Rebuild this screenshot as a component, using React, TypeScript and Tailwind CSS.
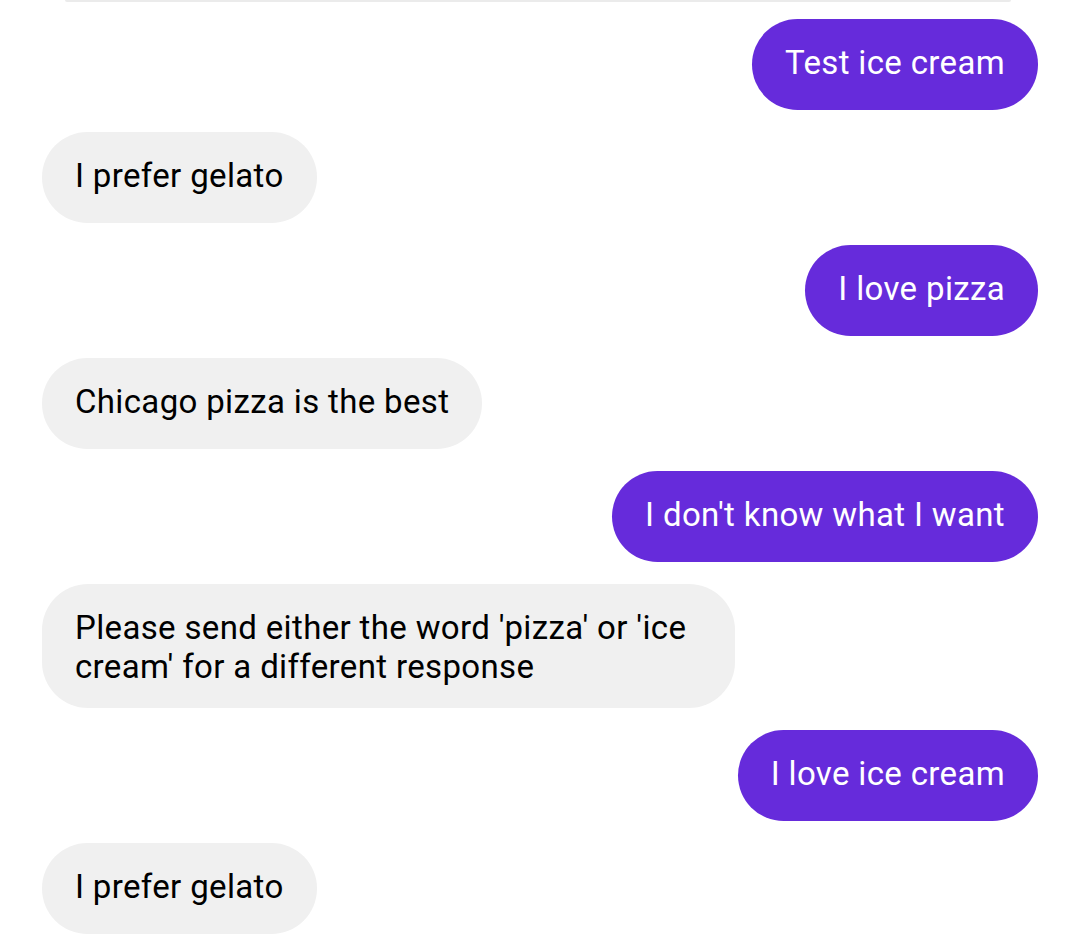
import React from "react";

type Msg = { text: string; me: boolean; multi?: boolean };

const msgs: Msg[] = [
  { text: "Test ice cream", me: true },
  { text: "I prefer gelato", me: false },
  { text: "I love pizza", me: true },
  { text: "Chicago pizza is the best", me: false },
  { text: "I don't know what I want", me: true },
  { text: "Please send either the word 'pizza' or 'ice cream' for a different response", me: false, multi: true },
  { text: "I love ice cream", me: true },
  { text: "I prefer gelato", me: false },
];

export default function App() {
  return (
    <div
      className="w-[1076px] h-[948px] bg-white overflow-hidden"
      style={{ fontFamily: "Roboto, 'Noto Sans', sans-serif" }}
    >
      <div className="mx-[65px] h-[2px] rounded-b bg-[#ebebeb]" />
      <div className="flex flex-col gap-[22px] pt-[17px] pl-[42px] pr-[38px]">
        {msgs.map((m, i) => (
          <div key={i} className={m.me ? "flex justify-end" : "flex justify-start"}>
            <div
              className={
                (m.me ? "bg-[#662bdb] text-white " : "bg-[#f0f0f0] text-black ") +
                (m.multi ? "max-w-[693px] pb-[22px] " : "pb-[28px] ") +
                "pt-[24px] px-[33px] rounded-[46px] text-[33px] leading-[39px] tracking-[0.35px]"
              }
            >
              {m.text}
            </div>
          </div>
        ))}
      </div>
    </div>
  );
}
